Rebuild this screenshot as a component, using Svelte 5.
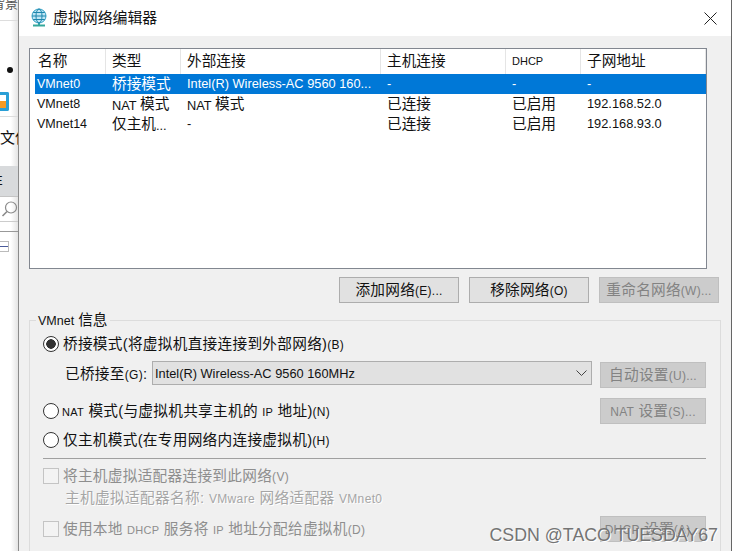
<script>
  const columns = [
    { label: '名称', width: 71 },
    { label: '类型', width: 75 },
    { label: '外部连接', width: 200 },
    { label: '主机连接', width: 125 },
    { label: 'DHCP', width: 75, small: true },
    { label: '子网地址', width: 125 }
  ];

  const rows = [
    ['VMnet0', '桥接模式', 'Intel(R) Wireless-AC 9560 160...', '-', '-', '-'],
    ['VMnet8', 'NAT 模式', 'NAT 模式', '已连接', '已启用', '192.168.52.0'],
    ['VMnet14', '仅主机...', '-', '已连接', '已启用', '192.168.93.0']
  ];

  // the list uses a bigger size for the chinese runs than for latin ones
  function runs(text) {
    return text.split(/([\u4e00-\u9fff]+)/).filter(Boolean).map((t) => ({
      text: t,
      cjk: /[\u4e00-\u9fff]/.test(t)
    }));
  }
</script>

<div class="page">
  <aside class="strip">
    <div class="strip-top"><span>背景</span></div>
    <div class="bullet"></div>
    <div class="app-icon"></div>
    <div class="strip-file">文件</div>
    <div class="strip-tab">E</div>
    <div class="strip-search">
      <svg width="18" height="20" viewBox="0 0 18 20">
        <circle cx="11" cy="8.5" r="5.5" fill="none" stroke="#8a8a8a" stroke-width="1.2" />
        <path d="M7 12.5 L2.5 17" stroke="#8a8a8a" stroke-width="1.6" />
      </svg>
    </div>
    <div class="strip-tree"><span class="minus"></span></div>
  </aside>

  <main class="dialog">
    <header class="titlebar">
      <svg class="globe" width="18" height="20" viewBox="0 0 18 20">
        <rect x="3" y="16.5" width="12" height="2" fill="#35a79c" />
        <rect x="8" y="14" width="2" height="3" fill="#35a79c" />
        <circle cx="9" cy="8" r="7" fill="#bfe6f5" stroke="#2f9fc4" stroke-width="1" />
        <ellipse cx="9" cy="8" rx="3" ry="7" fill="none" stroke="#1d86ad" stroke-width="1" />
        <path d="M2 8 H16 M3.2 4.5 H14.8 M3.2 11.5 H14.8" stroke="#1d86ad" stroke-width="1" />
      </svg>
      <span class="title">虚拟网络编辑器</span>
      <svg class="close" width="13" height="13" viewBox="0 0 13 13">
        <path d="M0.5 0.5 L12.5 12.5 M12.5 0.5 L0.5 12.5" stroke="#222" stroke-width="1" />
      </svg>
    </header>

    <div class="content">
      <section class="list">
        <div class="list-head">
          {#each columns as col}
            <div class="head-cell" class:small={col.small} style="width: {col.width}px">{col.label}</div>
          {/each}
        </div>
        {#each rows as row, i}
          <div class="list-row" class:selected={i === 0}>
            {#each row as cell, j}
              <div class="cell" class:first={j === 0} style="width: {columns[j].width}px">
                {#each runs(cell) as run}<span class:cjk={run.cjk}>{run.text}</span>{/each}
              </div>
            {/each}
          </div>
        {/each}
      </section>

      <div class="actions">
        <button class="btn">添加网络<small>(E)...</small></button>
        <button class="btn">移除网络<small>(O)</small></button>
        <button class="btn off">重命名网络<small>(W)...</small></button>
      </div>

      <section class="group">
        <div class="legend"><small>VMnet</small> 信息</div>

        <div class="line first-line">
          <span class="radio on"></span>
          <span class="label">桥接模式(将虚拟机直接连接到外部网络)<small>(B)</small></span>
        </div>

        <div class="line bridge-line">
          <span class="label bridge-label">已桥接至<small>(G)</small>:</span>
          <div class="combo">
            <span>Intel(R) Wireless-AC 9560 160MHz</span>
            <svg width="11" height="7" viewBox="0 0 11 7">
              <path d="M0.5 0.5 L5.5 5.5 L10.5 0.5" fill="none" stroke="#444" stroke-width="1" />
            </svg>
          </div>
          <button class="btn off side">自动设置<small>(U)...</small></button>
        </div>

        <div class="line nat-line">
          <span class="radio"></span>
          <span class="label"><small class="tiny">NAT</small> 模式(与虚拟机共享主机的 <small class="tiny">IP</small> 地址)<small>(N)</small></span>
          <button class="btn off side push"><small>NAT</small> 设置<small>(S)...</small></button>
        </div>

        <div class="line host-line">
          <span class="radio"></span>
          <span class="label">仅主机模式(在专用网络内连接虚拟机)<small>(H)</small></span>
        </div>

        <hr class="divider" />

        <div class="line check-line">
          <span class="check"></span>
          <span class="label muted">将主机虚拟适配器连接到此网络<small>(V)</small></span>
        </div>
        <div class="adapter">主机虚拟适配器名称: <small>VMware</small> 网络适配器 <small>VMnet0</small></div>

        <div class="line dhcp-line">
          <span class="check"></span>
          <span class="label muted">使用本地 <small class="tiny">DHCP</small> 服务将 <small class="tiny">IP</small> 地址分配给虚拟机<small>(D)</small></span>
          <button class="btn off side push"><small>DHCP</small> 设置<small>(A)...</small></button>
        </div>
      </section>
    </div>
  </main>

  <div class="watermark">CSDN @TACO TUESDAY67</div>
</div>

<style>
  :global(body) {
    margin: 0;
    background: #fff;
  }

  .page {
    position: relative;
    display: flex;
    width: 733px;
    height: 551px;
    overflow: hidden;
    font-family: "Liberation Sans", "Noto Sans CJK SC", sans-serif;
    font-size: 14.67px;
    color: #111;
  }

  small {
    font-size: 12px;
  }

  small.tiny {
    font-size: 11px;
  }

  /* background window peeking out on the left */
  .strip {
    width: 18px;
    flex: none;
    display: flex;
    flex-direction: column;
    background: linear-gradient(90deg, #fff 60%, #e4e4e4);
    overflow: hidden;
    border-right: 1px solid #8b8b8b;
  }

  .strip-top {
    box-sizing: border-box;
    height: 21px;
    overflow: hidden;
    border-bottom: 1px solid #ddd;
  }

  .strip-top span {
    display: block;
    margin: -7px 0 0 -8px;
    font-size: 13px;
    white-space: nowrap;
    color: #555;
  }

  .bullet {
    width: 6px;
    height: 6px;
    margin: 46px 0 0 7px;
    border-radius: 50%;
    background: #111;
  }

  .app-icon {
    box-sizing: border-box;
    width: 9px;
    height: 19px;
    margin-top: 19px;
    border: 3px solid #2a9fd6;
    border-left: none;
    border-radius: 0 2px 2px 0;
    background: linear-gradient(#fff 50%, #f59a23 50%);
  }

  .strip-file {
    box-sizing: border-box;
    height: 50px;
    margin-top: 5px;
    padding-top: 11px;
    border-top: 1px solid #ddd;
    white-space: nowrap;
    font-size: 15px;
    line-height: 20px;
  }

  .strip-tab {
    box-sizing: border-box;
    height: 31px;
    background: #d8dadc;
    font-size: 13px;
    line-height: 30px;
    text-indent: -6px;
    border-bottom: 1px solid #c4c4c4;
  }

  .strip-search {
    box-sizing: border-box;
    height: 25px;
    display: flex;
    align-items: center;
    border-bottom: 1px solid #ccc;
  }

  .strip-tree {
    height: 10px;
    padding-top: 9px;
    border-top: 1px solid #999;
    margin-top: 9px;
  }

  .minus {
    display: block;
    width: 8px;
    height: 9px;
    border: 1px solid #bbb;
    border-left: none;
    background: linear-gradient(#fff 4px, #4a5a9a 4px, #4a5a9a 5px, #fff 5px);
  }

  .dialog {
    width: 712px;
    flex: none;
    display: flex;
    flex-direction: column;
    background: #f0f0f0;
    border-right: 1px solid #666;
  }

  .titlebar {
    height: 36px;
    flex: none;
    display: flex;
    align-items: center;
    padding: 0 14px 0 11px;
    background: #fff;
  }

  .globe {
    margin-right: 5px;
  }

  .title {
    flex: 1;
    padding-bottom: 3px;
    font-size: 14.9px;
  }

  .content {
    padding: 12px 0 0 10px;
  }

  .list {
    box-sizing: border-box;
    width: 678px;
    height: 221px;
    padding: 0 0 0 5px;
    background: #fff;
    border: 1px solid #828790;
  }

  .list-head {
    display: flex;
    height: 25px;
  }

  .head-cell {
    box-sizing: border-box;
    padding-left: 3px;
    line-height: 24px;
    border-right: 1px solid #e5e5e5;
  }

  .head-cell:nth-child(n + 2) {
    padding-left: 6px;
  }

  .head-cell.small {
    font-size: 11px;
  }

  .list-row {
    display: flex;
    height: 20px;
    line-height: 20px;
  }

  .list-row.selected {
    background: #0078d7;
    color: #fff;
  }

  .cell {
    box-sizing: border-box;
    padding-left: 6px;
    font-size: 12.8px;
    white-space: nowrap;
    overflow: hidden;
  }

  .cell .cjk {
    font-size: 14.67px;
    vertical-align: 1px;
  }

  .cell.first {
    padding-left: 2px;
    font-size: 12.5px;
  }

  .actions {
    display: flex;
    justify-content: flex-end;
    gap: 10px;
    margin-top: 8px;
    width: 690px;
  }

  .btn {
    box-sizing: border-box;
    width: 120px;
    height: 26px;
    padding: 0 0 4px;
    background: #e1e1e1;
    border: 1px solid #adadad;
    font: inherit;
    letter-spacing: 0.25px;
    color: #111;
    white-space: nowrap;
  }

  .btn.off {
    background: #cccccc;
    border-color: #bfbfbf;
    color: #838383;
  }

  .btn.side {
    width: 106px;
  }

  .group {
    box-sizing: border-box;
    position: relative;
    width: 692px;
    height: 260px;
    margin-top: 17px;
    padding: 14px 14px 0 13px;
    border: 1px solid #dcdcdc;
  }

  .legend {
    position: absolute;
    top: -10px;
    left: 6px;
    padding: 0 2px;
    background: #f0f0f0;
    line-height: 18px;
  }

  .legend small {
    font-size: 12.5px;
  }

  .line {
    display: flex;
    align-items: center;
    white-space: nowrap;
  }

  .label {
    padding-bottom: 3px;
    letter-spacing: 0.28px;
  }

  .first-line {
    height: 18px;
  }

  .bridge-line {
    height: 27px;
    margin-top: 8px;
    padding-left: 22px;
    align-items: flex-start;
  }

  .bridge-line .btn {
    margin-top: 1px;
  }

  .bridge-label {
    width: 87px;
    flex: none;
    padding-bottom: 0;
    line-height: 26px;
  }

  .nat-line {
    height: 26px;
    margin-top: 10px;
  }

  .host-line {
    height: 18px;
    margin-top: 7px;
  }

  .check-line {
    height: 16px;
    margin-top: 9px;
  }

  .dhcp-line {
    height: 26px;
    margin-top: 8px;
  }

  .push {
    margin-left: auto;
  }

  .radio {
    box-sizing: border-box;
    width: 16px;
    height: 16px;
    flex: none;
    margin-right: 4px;
    border: 1px solid #333;
    border-radius: 50%;
    background: #fff;
  }

  .radio.on {
    background: radial-gradient(circle, #333 0 4.5px, #fff 5px);
  }

  .nat-line .radio {
    margin-right: 3px;
  }

  .check {
    box-sizing: border-box;
    width: 16px;
    height: 16px;
    flex: none;
    margin-right: 4px;
    border: 1px solid #c4c4c4;
    background: #f3f3f3;
  }

  .muted {
    color: #8e8e8e;
  }

  .combo {
    box-sizing: border-box;
    width: 440px;
    height: 24px;
    flex: none;
    display: flex;
    align-items: center;
    justify-content: space-between;
    margin-right: 8px;
    padding: 0 4px 0 2px;
    background: #e1e1e1;
    border: 1px solid #adadad;
    font-size: 12.8px;
  }

  .divider {
    height: 1px;
    margin: 9px 0 0;
    border: none;
    background: #a0a0a0;
  }

  .adapter {
    height: 18px;
    margin-top: 6px;
    padding-left: 22px;
    line-height: 16px;
    letter-spacing: 0.35px;
    white-space: nowrap;
    color: #a6a6a6;
    text-shadow: 1px 1px 0 #fff;
  }

  .watermark {
    position: absolute;
    right: 15px;
    bottom: 5px;
    font-size: 17.8px;
    color: #747474;
    text-shadow: 1px 1px 0 #fff;
    white-space: nowrap;
  }
</style>
